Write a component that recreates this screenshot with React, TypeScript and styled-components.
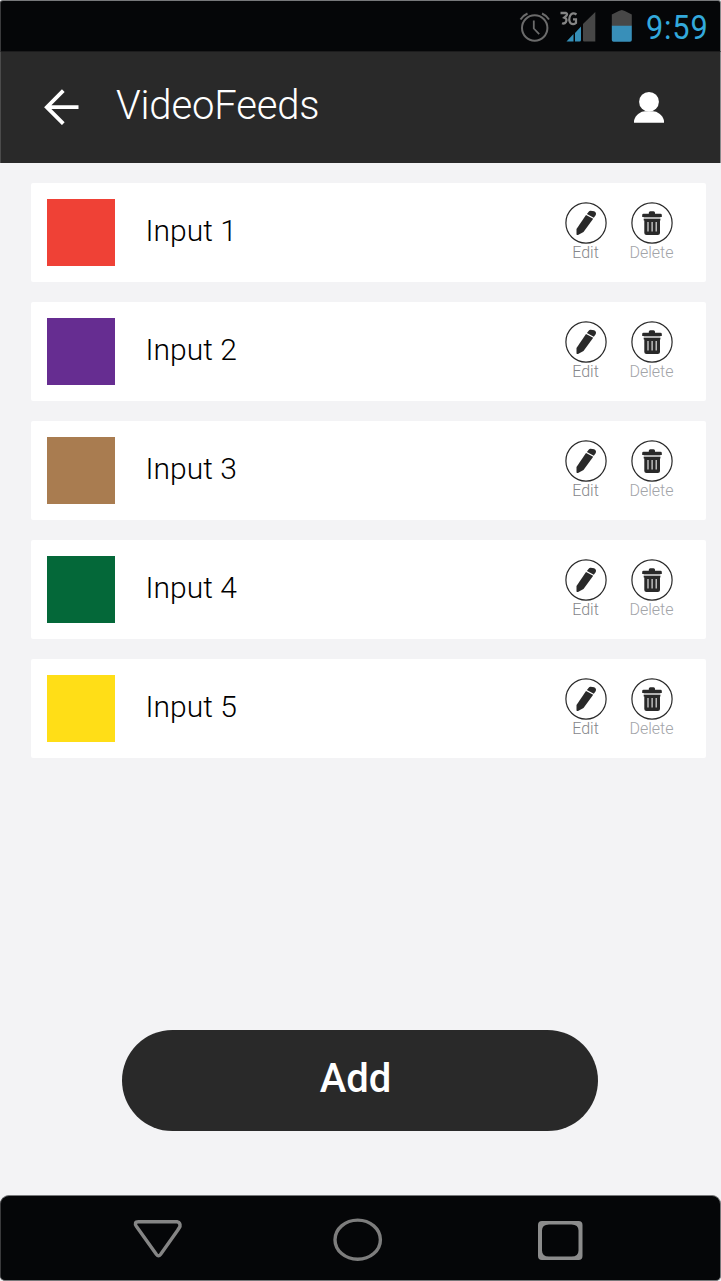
import React from 'react';
import styled, { createGlobalStyle } from 'styled-components';

const GlobalStyle = createGlobalStyle`
  * { box-sizing: border-box; }
  body { margin: 0; background: #f3f3f5; font-family: Roboto, "Liberation Sans", sans-serif; }
  button { font: inherit; border: 0; padding: 0; background: none; color: inherit; }
  svg { display: block; flex: none; }
`;

const Screen = styled.div`
  width: 721px;
  height: 1281px;
  display: flex;
  flex-direction: column;
  background: #f3f3f5;
  overflow: hidden;
`;

const StatusBar = styled.div`
  height: 51px;
  flex: none;
  display: flex;
  align-items: flex-start;
  padding-left: 518px;
  background: #050608;
  border-top: 1px solid #77787a;
  border-left: 1px solid #3a3a3c;
  border-right: 1px solid #8a8a8c;
  border-radius: 3px 3px 0 0;
`;

const StatusIcons = styled.div`
  display: grid;
  grid-template-columns: 40px 52px 22px;
`;

const Clock = styled.span`
  width: 64px;
  margin: 8px 0 0 13px;
  font-size: 33px;
  line-height: 38px;
  letter-spacing: 0.9px;
  color: #33a9dc;
  white-space: nowrap;
  transform: scaleX(0.93);
  transform-origin: left;
`;

const Header = styled.header`
  height: 112px;
  flex: none;
  display: flex;
  background: #292929;
  border-top: 1px solid #1c1c1d;
  border-left: 1px solid #4b4b4b;
  border-right: 1px solid #8a8a8c;
`;

const BackButton = styled.button`
  width: 36px;
  height: 36px;
  margin: 37px 0 0 42px;
`;

const Title = styled.h1`
  width: 210px;
  margin: 30px 0 0 37px;
  font-size: 40px;
  line-height: 48px;
  font-weight: 300;
  letter-spacing: -0.15px;
  color: #fff;
`;

const ProfileButton = styled.button`
  width: 32px;
  height: 34px;
  margin: 38px 55px 0 auto;
`;

const FeedList = styled.main`
  flex: 1;
  display: flex;
  flex-direction: column;
  gap: 20px;
  padding: 20px 15px 0 31px;
`;

const FeedCard = styled.article`
  height: 99px;
  flex: none;
  display: flex;
  align-items: flex-start;
  padding: 16px 31.5px 0 16.4px;
  background: #fff;
  border-radius: 2px;
`;

const Swatch = styled.div<{ $color: string }>`
  width: 67.2px;
  height: 67px;
  background: ${(p) => p.$color};
`;

const FeedName = styled.span`
  flex: 1;
  margin: 14px 0 0 31px;
  font-size: 30px;
  line-height: 36px;
  font-weight: 300;
  color: #000;
`;

const Actions = styled.div`
  display: flex;
  gap: 20px;
  margin-top: 3px;
`;

const Action = styled.button<{ $tone: string }>`
  width: 46px;
  display: flex;
  flex-direction: column;
  align-items: center;
  font-size: 16px;
  line-height: 18px;
  font-weight: 300;
  color: ${(p) => p.$tone};
`;

const AddButton = styled.button`
  width: 476px;
  height: 101px;
  flex: none;
  align-self: center;
  margin: 0 1px 64px 0;
  padding: 0 9px 3px 0;
  border-radius: 51px;
  background: #292929;
  color: #fff;
  font-size: 40px;
  line-height: 48px;
  font-weight: 500;
`;

const NavBar = styled.nav`
  height: 86px;
  flex: none;
  display: flex;
  padding: 21px 0 0 132px;
  background: #050608;
  border: 1px solid #77787a;
  border-left-color: #3a3a3c;
  border-radius: 9px 9px 5px 5px;
`;

const NavButton = styled.button<{ $offset?: number }>`
  margin-left: ${(p) => p.$offset ?? 0}px;
  width: 50px;
  height: 46px;
`;

const feeds = [
  { name: 'Input 1', color: '#ef4136' },
  { name: 'Input 2', color: '#662d91' },
  { name: 'Input 3', color: '#a97c50' },
  { name: 'Input 4', color: '#046839' },
  { name: 'Input 5', color: '#ffde17' },
];

const AlarmIcon = () => (
  <svg width="32" height="44" viewBox="519 1 32 44" fill="none" stroke="#6b6b6b" strokeWidth="2">
    <circle cx="534.7" cy="28" r="12.7" />
    <path d="M533.8 20.5v8l5.4 5.6" strokeWidth="1.8" />
    <path d="M520.5 19.5q2.5-4 7-6M549 19.5q-2.5-4-7-6" />
  </svg>
);

const SignalIcon = () => (
  <svg width="38" height="44" viewBox="559 1 38 44">
    <path d="M560.5 13h5.500q1.8.8.5 2.600l-2.200 2q3.200 1 1.700 4.200-1.500 2.400-4 1.400" fill="none" stroke="#858585" strokeWidth="2.3" />
    <path d="M576.5 14.5q-4-2.800-6.300 1-2 4.500.3 7.600 2.700 2.300 5.500-.2v-3.600h-3" fill="none" stroke="#858585" strokeWidth="2.2" />
    <path d="M566.5 41.5l7-7.500V41.500z" fill="#358fb8" />
    <path d="M575 33l6-6.500V40q0 1.500-1.500 1.500H575z" fill="#358fb8" />
    <path d="M583 24l12.300-12V41.500H584q-1 0-1-1z" fill="#474747" />
  </svg>
);

const BatteryIcon = () => (
  <svg width="22" height="44" viewBox="0 1 22 44">
    <path d="M.8 26V14.500l7-3.500 3-1 3 1 7 3.500V26z" fill="#474747" />
    <path d="M.8 25.700h20V40q0 1.800-1.800 1.800H2.600Q.8 41.800.8 40z" fill="#388fb9" />
  </svg>
);

const BackIcon = () => (
  <svg width="36" height="36" viewBox="0 0 36 36" fill="none" stroke="#fff" strokeWidth="3.8">
    <path d="M20.300 1.700L3.800 18.200l16.500 16.500M3.800 18.200H35.500" />
  </svg>
);

const ProfileIcon = () => (
  <svg width="32" height="34" viewBox="0 0 32 34" fill="#fff">
    <circle cx="16" cy="11.8" r="9.9" />
    <path d="M1 32.800V30.500C2.500 24.700 8 21.300 12 21.300h8c4 0 9.500 3.400 11 9.200v2.300z" />
  </svg>
);

const EditIcon = () => (
  <svg width="42" height="42" viewBox="0 0 42 42">
    <circle cx="21" cy="21" r="20.1" fill="#fff" stroke="#292929" strokeWidth="1.2" />
    <path d="M21 13l7.200 3.800L18.500 30l-5.500 3q-1.300.3-1.500-.8v-5.300z" fill="#292929" />
    <path d="M21.900 12l2-2.500q.6-.8 1.700-.7l3.500.5q1.400.5 1.900 2l-.2 1.700-2 2.800z" fill="#292929" />
  </svg>
);

const TrashIcon = () => (
  <svg width="42" height="42" viewBox="0 0 42 42">
    <circle cx="21" cy="21" r="20.1" fill="#fff" stroke="#292929" strokeWidth="1.2" />
    <path d="M11.200 15.100v-2q0-1.300 1.300-1.300h5.300v-1q0-1.600 1.500-1.600h3.200q1.500 0 1.500 1.600v1h5.500q1.300 0 1.300 1.300v2z" fill="#292929" />
    <path d="M12.700 15.100h16.700v1.800H12.700z" fill="#aaa" />
    <path d="M12.700 16.900h16.700v1.600h-.4v12.400q0 2.100-2.200 2.100H15.500q-2.200 0-2.200-2.100V18.500h-.6z" fill="#292929" />
    <path d="M17 19.900v9.600M21.100 19.900v9.600M25.200 19.900v9.600" stroke="#dedede" strokeWidth="1.2" />
  </svg>
);

export default function App() {
  return (
    <>
      <GlobalStyle />
      <Screen>
        <StatusBar>
          <StatusIcons>
            <AlarmIcon />
            <SignalIcon />
            <BatteryIcon />
          </StatusIcons>
          <Clock>9:59</Clock>
        </StatusBar>
        <Header>
          <BackButton aria-label="Back"><BackIcon /></BackButton>
          <Title>VideoFeeds</Title>
          <ProfileButton aria-label="Profile"><ProfileIcon /></ProfileButton>
        </Header>
        <FeedList>
          {feeds.map((feed) => (
            <FeedCard key={feed.name}>
              <Swatch $color={feed.color} />
              <FeedName>{feed.name}</FeedName>
              <Actions>
                <Action $tone="#85868a"><EditIcon />Edit</Action>
                <Action $tone="#a2a4a8"><TrashIcon />Delete</Action>
              </Actions>
            </FeedCard>
          ))}
        </FeedList>
        <AddButton>Add</AddButton>
        <NavBar>
          <NavButton aria-label="Back">
            <svg width="50" height="46" viewBox="133 1217 50 46">
              <path d="M138.500 1221.800H177.500Q180.500 1222.500 180 1226.500L177.500 1230.500 160.500 1254.500Q158.500 1257 156.500 1254.500L136.500 1226.500Q133.500 1221.800 138.500 1221.800z" fill="none" stroke="#858585" strokeWidth="3.4" strokeLinejoin="round" />
            </svg>
          </NavButton>
          <NavButton $offset={150} aria-label="Home">
            <svg width="50" height="46" viewBox="333 1217 50 46">
              <ellipse cx="357.7" cy="1239.7" rx="22.7" ry="19.6" fill="none" stroke="#7d7d7d" strokeWidth="3.4" />
            </svg>
          </NavButton>
          <NavButton $offset={152} aria-label="Recents">
            <svg width="50" height="46" viewBox="535 1217 50 46">
              <path fillRule="evenodd" fill="#8c8c8c" d="M542 1221h36.500q4 0 4 4v31q0 4-4 4H542q-4 0-4-4v-31q0-4 4-4zM549 1224.500q-7 0-7 6v20q0 6 7 6h22.500q7 0 7-6v-20q0-6-7-6z" />
            </svg>
          </NavButton>
        </NavBar>
      </Screen>
    </>
  );
}
